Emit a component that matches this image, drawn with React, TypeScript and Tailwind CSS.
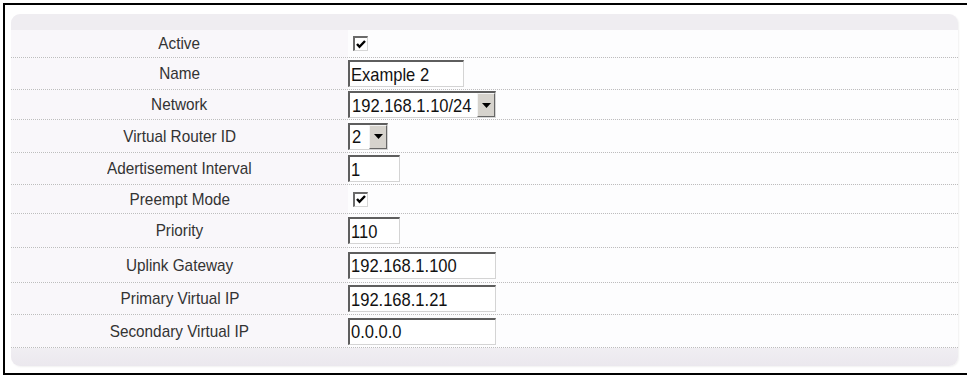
import React from "react";

const inputFont = { fontFamily: '"Liberation Sans", Arial, sans-serif' };

function Check() {
  return (
    <div className="ml-[5px] w-[15px] h-[15px] border-t-2 border-l-2 border-t-[#6a6a6a] border-l-[#6a6a6a] border-r border-b border-r-[#d6d6d6] border-b-[#d6d6d6] bg-white flex items-center justify-center">
      <svg width="10" height="9" viewBox="0 0 10 9">
        <path d="M1 4 L3.5 6.8 L9 1" stroke="#000" strokeWidth="2.4" fill="none" />
      </svg>
    </div>
  );
}

function Txt({ value }: { value: string }) {
  return (
    <span className="inline-block whitespace-nowrap origin-left scale-x-[0.87] text-[#111]">{value}</span>
  );
}

function TextBox({ value, w }: { value: string; w: string }) {
  return (
    <div
      className={`${w} h-[27px] border-t-2 border-l-2 border-t-[#5e5e5e] border-l-[#5e5e5e] border-r border-b border-r-[#d4d4d4] border-b-[#d4d4d4] bg-white flex items-center pl-[1px] text-[19px] leading-none overflow-hidden`}
      style={inputFont}
    >
      <Txt value={value} />
    </div>
  );
}

function SelectBox({ value, w }: { value: string; w: string }) {
  return (
    <div
      className={`${w} h-[27px] border-t-2 border-l-2 border-t-[#5e5e5e] border-l-[#5e5e5e] border-r border-b border-r-[#d4d4d4] border-b-[#d4d4d4] bg-white flex items-stretch text-[19px] leading-none`}
      style={inputFont}
    >
      <div className="flex-1 flex items-center pl-[2px] overflow-hidden">
        <Txt value={value} />
      </div>
      <div className="w-[18px] bg-[#d6d3cd] border-t border-l border-t-[#f4f4f4] border-l-[#f4f4f4] border-r border-b border-r-[#666] border-b-[#666] flex items-center justify-center">
        <svg width="9" height="5" viewBox="0 0 9 5">
          <path d="M0 0 H9 L4.5 5 Z" fill="#000" />
        </svg>
      </div>
    </div>
  );
}

const rows: { label: string; h: string; el: React.ReactNode }[] = [
  { label: "Active", h: "h-[28px]", el: <Check /> },
  { label: "Name", h: "h-[32px]", el: <TextBox value="Example 2" w="w-[116px]" /> },
  { label: "Network", h: "h-[30px]", el: <SelectBox value="192.168.1.10/24" w="w-[148px]" /> },
  { label: "Virtual Router ID", h: "h-[33px]", el: <SelectBox value="2" w="w-[40px]" /> },
  { label: "Adertisement Interval", h: "h-[32px]", el: <TextBox value="1" w="w-[52px]" /> },
  { label: "Preempt Mode", h: "h-[29px]", el: <Check /> },
  { label: "Priority", h: "h-[34px]", el: <TextBox value="110" w="w-[52px]" /> },
  { label: "Uplink Gateway", h: "h-[35px]", el: <TextBox value="192.168.1.100" w="w-[148px]" /> },
  { label: "Primary Virtual IP", h: "h-[32px]", el: <TextBox value="192.168.1.21" w="w-[148px]" /> },
  { label: "Secondary Virtual IP", h: "h-[33px]", el: <TextBox value="0.0.0.0" w="w-[148px]" /> },
];

export default function App() {
  return (
    <div className="w-[967px] h-[376px] bg-white overflow-hidden pl-[3px] pt-[3px]">
      <div className="w-[980px] h-[372px] border-t-2 border-l-2 border-b-2 border-black bg-white pl-[6px] pt-[9px]">
        <div className="w-[947px] h-[352px] rounded-[9px] bg-[#fcfbfd] flex flex-col overflow-hidden shadow-[1px_1px_2px_rgba(0,0,0,0.06)]">
          <div className="h-[16px] bg-[#efedf1]" />
          {rows.map((r) => (
            <div
              key={r.label}
              className={`${r.h} flex border-b border-dotted border-[#bdbdbd]`}
            >
              <div
                className="w-[337px] bg-[#f9f7fa] flex items-center justify-center text-[17px] leading-none text-[#333]"
                style={{ fontFamily: '"Liberation Sans", Arial, sans-serif' }}
              >
                <span className="inline-block whitespace-nowrap scale-x-[0.9]">{r.label}</span>
              </div>
              <div className="flex-1 bg-[#fdfdfe] flex items-center">{r.el}</div>
            </div>
          ))}
          <div className="flex-1 bg-gradient-to-b from-[#f0eef2] to-[#ebe8ee]" />
        </div>
      </div>
    </div>
  );
}
